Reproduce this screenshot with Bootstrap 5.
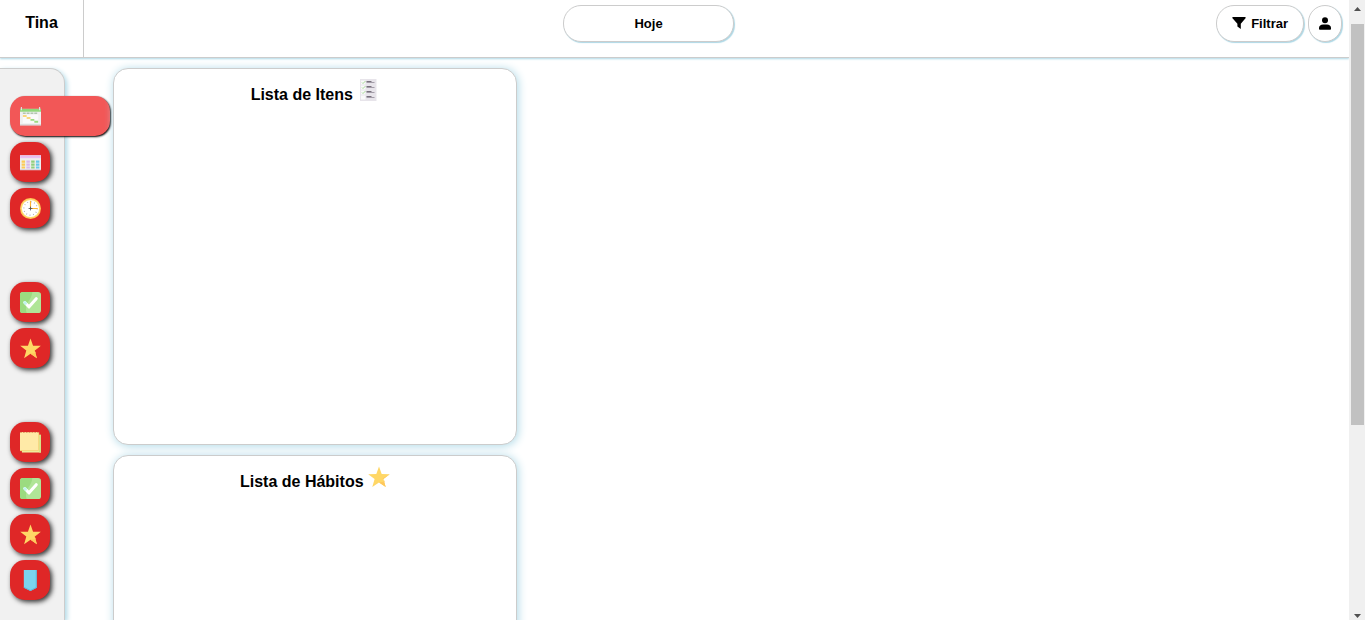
<!DOCTYPE html>
<html lang="pt-BR">
<head>
<meta charset="utf-8">
<meta name="viewport" content="width=device-width, initial-scale=1">
<title>Tina</title>
<link href="https://cdn.jsdelivr.net/npm/bootstrap@5.3.0/dist/css/bootstrap.min.css" rel="stylesheet">
<style>
  body { font-family: "Liberation Sans", Arial, sans-serif; font-size: 16px; color: #000; }
  .topbar { height: 58px; padding-right: 7px; border-bottom: 1px solid #ccc; box-shadow: 0 1px 2px lightblue; }
  .brand { width: 84px; padding: 11px 0 0 0; border-right: 1px solid #ccc; color: #000; }
  .top-actions { gap: 4px; padding-left: 3px; }
  .top-day, .top-actions { padding-top: 5px; }
  .pill { height: 37px; padding: 0 15px; border: 1px solid #ccc; border-radius: 18px; background: #fff;
          box-shadow: 1px 1px 1px lightblue; font-size: 13px; font-weight: bold; color: #000; }
  .pill-day { width: 171px; }
  .pill-filter { gap: 5px; }
  .pill-user { width: 34px; padding: 0; }
  .workspace { padding-top: 10px; }
  .side { width: 65px; padding: 27px 0 0 10px; background: #f1f1f1; border: 1px solid #ccc; border-width: 1px 1px 0 0;
          border-top-right-radius: 15px; box-shadow: 2px 2px 5px lightblue; }
  .side-group { gap: 6px; margin-bottom: 54px; }
  .side-btn { width: 40px; height: 40px; padding: 0 0 0 10px; border: 0; border-radius: 15px; background: #df2727;
              box-shadow: 2px 2px 5px rgba(0,0,0,.8); }
  .side-btn.current { width: 100px; background: #f25757; box-shadow: 1px 1px 2px #000; }
  .side-btn .ico { width: 21px; height: 21px; }
  .boards { gap: 10px; padding-left: 48px; }
  .board { width: 404px; max-width: 100%; height: 377px; padding-top: 10px; border: 1px solid #ccc; border-radius: 15px;
           background: #fff; box-shadow: 1px 1px 10px lightblue; }
  .board h2 { font-size: 16px; font-weight: bold; line-height: 24px; }
  .board .ico { width: 22px; height: 22px; vertical-align: -1px; }
  .scroll-rail { width: 16px; background: #f0f0f0; padding: 7px 1px 2px 2px; }
  .scroll-thumb { height: 401px; margin-top: 13px; background: #c1c1c1; }
</style>
</head>
<body class="vh-100 overflow-hidden d-flex bg-white">
<svg class="d-none" aria-hidden="true">
  <symbol id="i-check" viewBox="0 0 22 22"><rect width="22" height="22" rx="3" fill="#b0e597"/><path d="M3 0h10C12 7 9 9 7 13c-1 3-1 6 0 9H3a3 3 0 0 1-3-3V3a3 3 0 0 1 3-3z" fill="#9bdb80"/><path d="M5 11l4.500 4.500L17 7" fill="none" stroke="#fff" stroke-width="3.200" stroke-linecap="round" stroke-linejoin="round"/><path d="M5 11l.8.800" stroke="#c0f4ee" stroke-width="3" stroke-linecap="round"/></symbol>
  <symbol id="i-star" viewBox="0 0 22 22"><path d="M11 .5l2.700 7.500 8.100.2-6.400 4.900 2.300 8-6.700-4.600-6.700 4.600 2.300-8L.2 8.200l8.100-.2z" fill="#ffd766"/><path d="M21.800 8.200l-6.400 4.900 2.300 8L11 16.500l6-1-2.500-3z" fill="#ffc85c"/></symbol>
</svg>

<div class="flex-grow-1 d-flex flex-column overflow-hidden">
  <header class="topbar d-flex flex-shrink-0">
    <a href="#" class="brand fw-bold text-center text-decoration-none flex-shrink-0">Tina</a>
    <div class="top-day flex-grow-1 d-flex justify-content-center align-items-start">
      <button type="button" class="pill pill-day">Hoje</button>
    </div>
    <div class="top-actions d-flex align-items-start">
      <button type="button" class="pill pill-filter d-flex align-items-center"><svg width="14" height="14" viewBox="0 0 14 14" aria-hidden="true"><path d="M1 0h12c.7 0 1 .8.500 1.300L8.800 6.800v5.200L5.400 9.500V6.800L.500 1.300C0 .8.300 0 1 0z"/></svg>Filtrar</button>
      <button type="button" class="pill pill-user" aria-label="Perfil"><svg width="12" height="14" viewBox="0 0 12 14" aria-hidden="true"><circle cx="6" cy="3.200" r="3"/><path d="M0 12v-1C0 8.700 1.800 7.500 4 7.500h4c2.200 0 4 1.200 4 3.500v1c0 .5-.4.800-.8.800H.8c-.4 0-.8-.3-.8-.8z"/></svg></button>
    </div>
  </header>

  <div class="workspace flex-grow-1 d-flex overflow-hidden">
    <nav class="side flex-shrink-0" aria-label="Menu">
      <div class="side-group d-flex flex-column">
        <button type="button" class="side-btn current d-flex align-items-center" aria-label="Calendário"><svg class="ico" viewBox="0 0 22 22"><path d="M0 3h22v17H0z" fill="#f0f0f0"/><path d="M0 3h22v3H0z" fill="#91d67b"/><path d="M1.500 1v3.500M20.500 1v3.500" stroke="#ddd" stroke-width="1.200"/><path d="M0 19h22v1.500H0z" fill="#d8d8d8"/><path d="M3 7.500h16" stroke="#8bab87" stroke-dasharray="3 1"/><path d="M3 9h16v9H3z" fill="#fafafa"/><path d="M3 9.500h4v2H3zM7 11.500h4v2H7z" fill="#f9d77e"/><path d="M11 13.500h4v2h-4zM15 15.500h4v2h-4z" fill="#9bdb80"/></svg></button>
        <button type="button" class="side-btn d-flex align-items-center" aria-label="Semana"><svg class="ico" viewBox="0 0 22 22"><path d="M0 3.500h22v15.500H0z" fill="#eee"/><path d="M0 3.500h22v3H0z" fill="#edc5f2"/><path d="M1 5h20" stroke="#dfb4e7" stroke-width=".6"/><path d="M0 18h22v1H0z" fill="#d7cfdc"/><g stroke-width="3.600"><path d="M3.500 9v8.500" stroke="#fccb57" stroke-dasharray="2.200 .9"/><path d="M8.500 9v8.500" stroke="#d7b9ed" stroke-dasharray="2.200 .9"/><path d="M13.500 9v8.500" stroke="#91cf7c" stroke-dasharray="2.200 .9"/><path d="M18.500 9v8.500" stroke="#69c8e9" stroke-dasharray="2.200 .9"/></g></svg></button>
        <button type="button" class="side-btn d-flex align-items-center" aria-label="Horários"><svg class="ico" viewBox="0 0 22 22"><circle cx="11" cy="11" r="11" fill="#ffc957"/><circle cx="11" cy="11" r="10" fill="#ffda73"/><circle cx="11" cy="11" r="9" fill="#fff"/><circle cx="11" cy="11" r="7" fill="none" stroke="#a9a9b2" stroke-width="1.200" stroke-dasharray=".9 2.765"/><path d="M11 3v8h7.500" fill="none" stroke="#ffb52e" stroke-width="1.200"/><path d="M11 9v4M9 11h4" stroke="#555" stroke-width=".9"/></svg></button>
      </div>
      <div class="side-group d-flex flex-column">
        <button type="button" class="side-btn d-flex align-items-center" aria-label="Itens"><svg class="ico"><use href="#i-check"/></svg></button>
        <button type="button" class="side-btn d-flex align-items-center" aria-label="Hábitos"><svg class="ico"><use href="#i-star"/></svg></button>
      </div>
      <div class="side-group d-flex flex-column">
        <button type="button" class="side-btn d-flex align-items-center" aria-label="Notas"><svg class="ico" viewBox="0 0 22 22"><path d="M2 3h20v18.500H2z" fill="#eef0a0"/><path d="M20 3h2v18.500h-2z" fill="#d7e386"/><path d="M0 0h20v19.500H0z" fill="#ffeaa7"/><path d="M19.500 1v18.500H0" fill="none" stroke="#f5d67b"/><path d="M0 .5h20" stroke="#df9c63" stroke-dasharray="2 1"/></svg></button>
        <button type="button" class="side-btn d-flex align-items-center" aria-label="Nova tarefa"><svg class="ico"><use href="#i-check"/></svg></button>
        <button type="button" class="side-btn d-flex align-items-center" aria-label="Novo hábito"><svg class="ico"><use href="#i-star"/></svg></button>
        <button type="button" class="side-btn d-flex align-items-center" aria-label="Etiquetas"><svg class="ico" viewBox="0 0 22 22"><path d="M4 0h13.500v18.500L11 22l-7-3.500z" fill="#7bd4ef"/><path d="M16.500 0h1v18.500L11 22l-7-3.500v-1l7 3.500 5.500-3z" fill="#5cb8dc"/></svg></button>
      </div>
    </nav>

    <main class="boards flex-grow-1 d-flex flex-column">
      <section class="board flex-shrink-0 text-center"><h2 class="m-0">Lista de Itens <svg class="ico" viewBox="0 0 22 22" aria-hidden="true"><path d="M3 0h16.500v22H3z" fill="#e7e4ea"/><path d="M4 1.500h4.500v4H4zM4 6.500h4.500v4H4zM4 11.500h4.500v4H4zM4 16.500h4.500v4H4z" fill="#fafafa"/><path d="M5 3.500l1 1 2.500-2.500M5 8.500l1 1L8.500 7M5 13.500l1 1L8.500 12" fill="none" stroke="#9bd58a" stroke-width=".9"/><path d="M9.500 2.500h5M9.500 7.500h5M9.500 12.500h5M9.500 17.500h5" stroke="#77717c"/><path d="M9.500 3.500h8M9.500 8.500h8M9.500 13.500h8M9.500 18.500h8" stroke="#a39da8"/></svg></h2></section>
      <section class="board flex-shrink-0 text-center"><h2 class="m-0">Lista de Hábitos <svg class="ico" aria-hidden="true"><use href="#i-star"/></svg></h2></section>
    </main>
  </div>
</div>

<div class="scroll-rail flex-shrink-0 d-flex flex-column align-items-center" aria-hidden="true">
  <svg class="flex-shrink-0" width="7" height="4" viewBox="0 0 7 4"><path d="M0 4l3.500-4L7 4z" fill="#505050"/></svg>
  <div class="scroll-thumb w-100"></div>
  <svg class="mt-auto flex-shrink-0" width="7" height="4" viewBox="0 0 7 4"><path d="M0 0h7L3.500 4z" fill="#505050"/></svg>
</div>
<script src="https://cdn.jsdelivr.net/npm/bootstrap@5.3.0/dist/js/bootstrap.bundle.min.js"></script>
</body>
</html>
